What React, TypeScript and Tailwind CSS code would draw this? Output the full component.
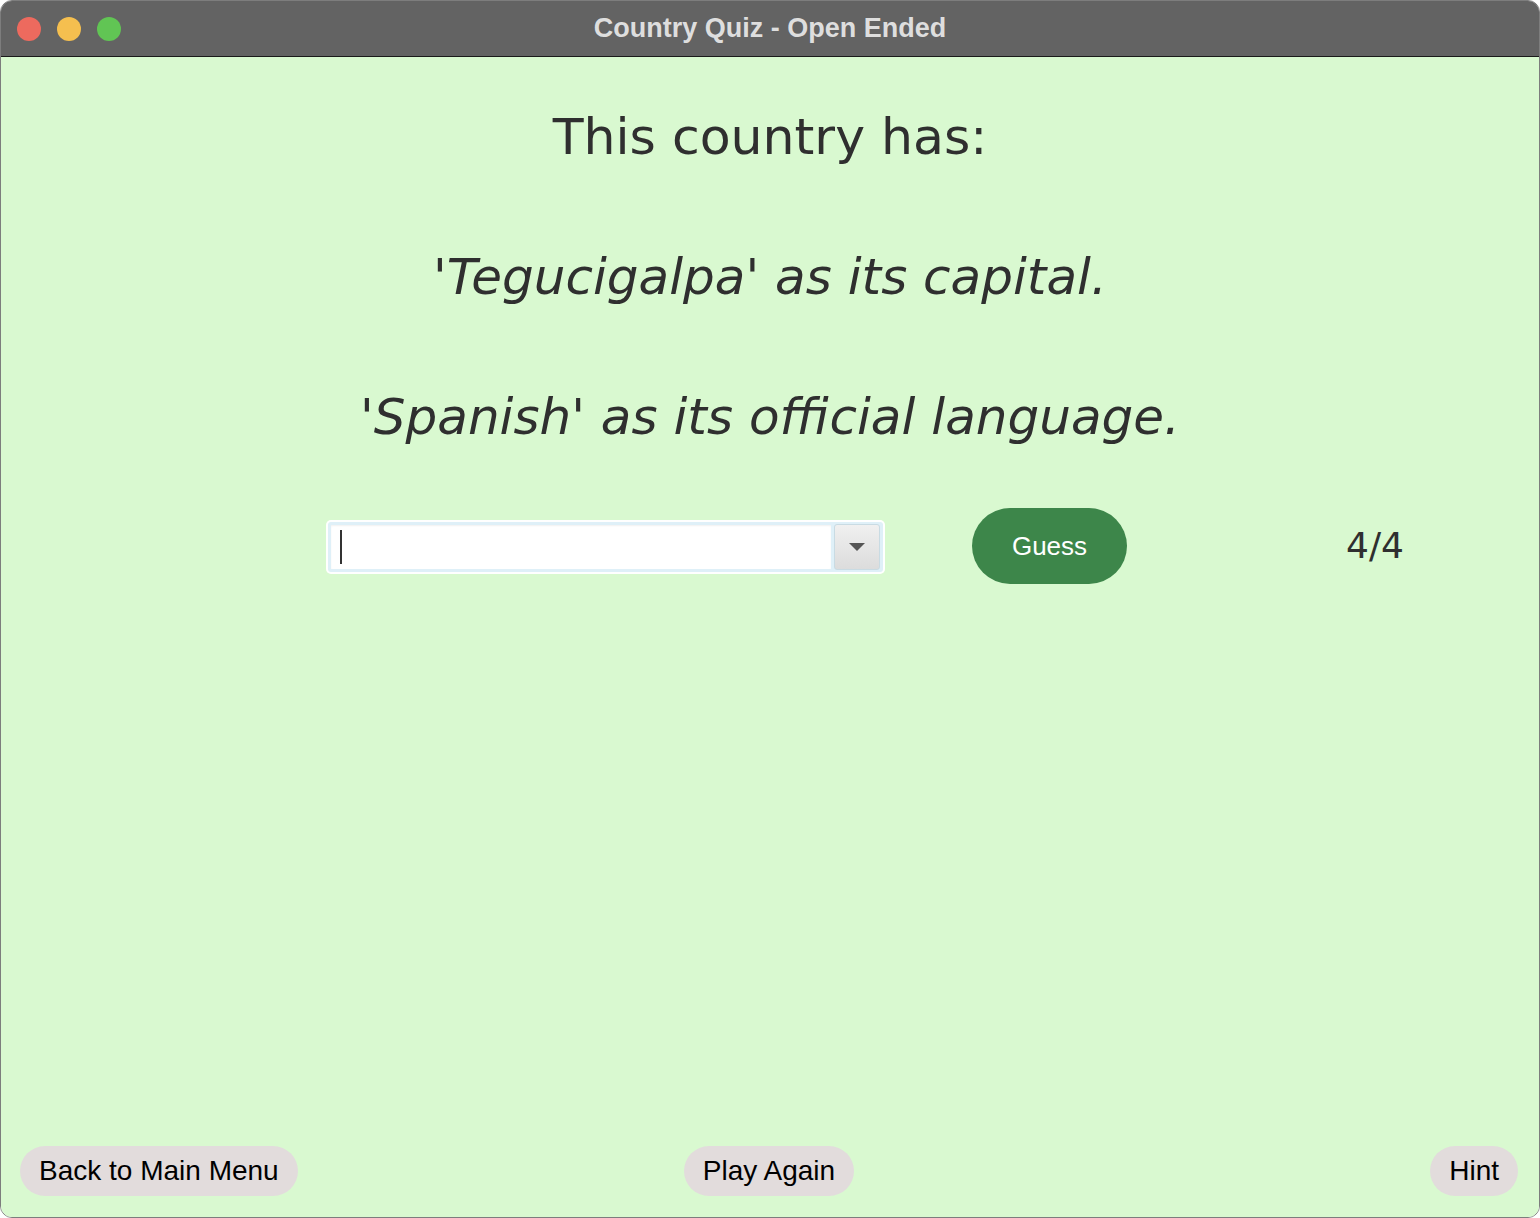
// ---- Window chrome ----

function TrafficLights() {
  return (
    <div className="flex items-center gap-4 pl-4">
      <div className="w-6 h-6 rounded-full bg-[#ed6a5e]" />
      <div className="w-6 h-6 rounded-full bg-[#f5bf4f]" />
      <div className="w-6 h-6 rounded-full bg-[#61c554]" />
    </div>
  )
}

// ---- Quiz parts ----

function CountryCombo() {
  return (
    <div className="w-[559px] h-[54px] rounded-[5px] bg-white p-[2px]">
      <div className="flex h-full rounded-[3px] bg-[#dff0f8] p-[3px]">
        <div className="flex-1 flex items-center bg-white pl-[9px] mr-[3px] shadow-[inset_0_1px_2px_rgba(0,0,0,0.06)]">
          <div className="w-[2px] h-[34px] bg-[#333]" />
        </div>
        <div className="w-[46px] -my-[1px] flex items-center justify-center rounded-[3px] border border-[#c9dbe3] bg-gradient-to-b from-[#f0f0f0] to-[#dcdcdc]">
          <svg width="18" height="10" viewBox="0 0 18 10">
            <path d="M1 1 L17 1 L9 9 Z" fill="#555" />
          </svg>
        </div>
      </div>
    </div>
  )
}

function PillButton({ label }: { label: string }) {
  return (
    <button className="h-[50px] px-[19px] rounded-full bg-[#e2dcdc] text-[28px] text-black font-['Liberation_Sans',Arial,sans-serif]">
      {label}
    </button>
  )
}

const CLUES = ["'Tegucigalpa' as its capital.", "'Spanish' as its official language."]

export default function App() {
  return (
    <div className="w-[1540px] h-[1218px] bg-white">
      <div className="h-full flex flex-col rounded-[12px] overflow-hidden border border-[#7d7d7d]">
        {/* Title bar */}
        <div className="relative h-[56px] shrink-0 flex items-center bg-[#636363] border-b border-[#1a1a1a]">
          <TrafficLights />
          <div className="absolute inset-0 flex items-center justify-center text-[27px] font-bold text-[#dedede] font-['Liberation_Sans',Arial,sans-serif]">
            Country Quiz - Open Ended
          </div>
        </div>

        {/* Content */}
        <div className="flex-1 flex flex-col bg-[#d9f9d0] font-['DejaVu_Sans',Verdana,sans-serif] text-[#2f2f2f]">
          <div className="pt-[10px]">
            <div className="h-[140px] flex items-center justify-center text-[50.5px]">This country has:</div>
            {CLUES.map((c) => (
              <div key={c} className="h-[140px] flex items-center justify-center text-[50px] italic">
                {c}
              </div>
            ))}
          </div>

          <div className="mt-[21px] h-[76px] flex items-center">
            <div className="ml-[325px] mt-[1px]">
              <CountryCombo />
            </div>
            <button className="ml-[87px] w-[155px] h-[76px] rounded-full bg-[#3d864a] text-white text-[26px] font-['Liberation_Sans',Arial,sans-serif]">
              Guess
            </button>
            <div className="ml-[219px] text-[36px] text-[#2f2f2f]">4/4</div>
          </div>

          <div className="flex-1" />

          {/* Footer buttons */}
          <div className="grid grid-cols-3 items-end pl-[19px] pr-[21px] pb-[21px]">
            <div className="justify-self-start"><PillButton label="Back to Main Menu" /></div>
            <div className="justify-self-center"><PillButton label="Play Again" /></div>
            <div className="justify-self-end"><PillButton label="Hint" /></div>
          </div>
        </div>
      </div>
    </div>
  )
}
